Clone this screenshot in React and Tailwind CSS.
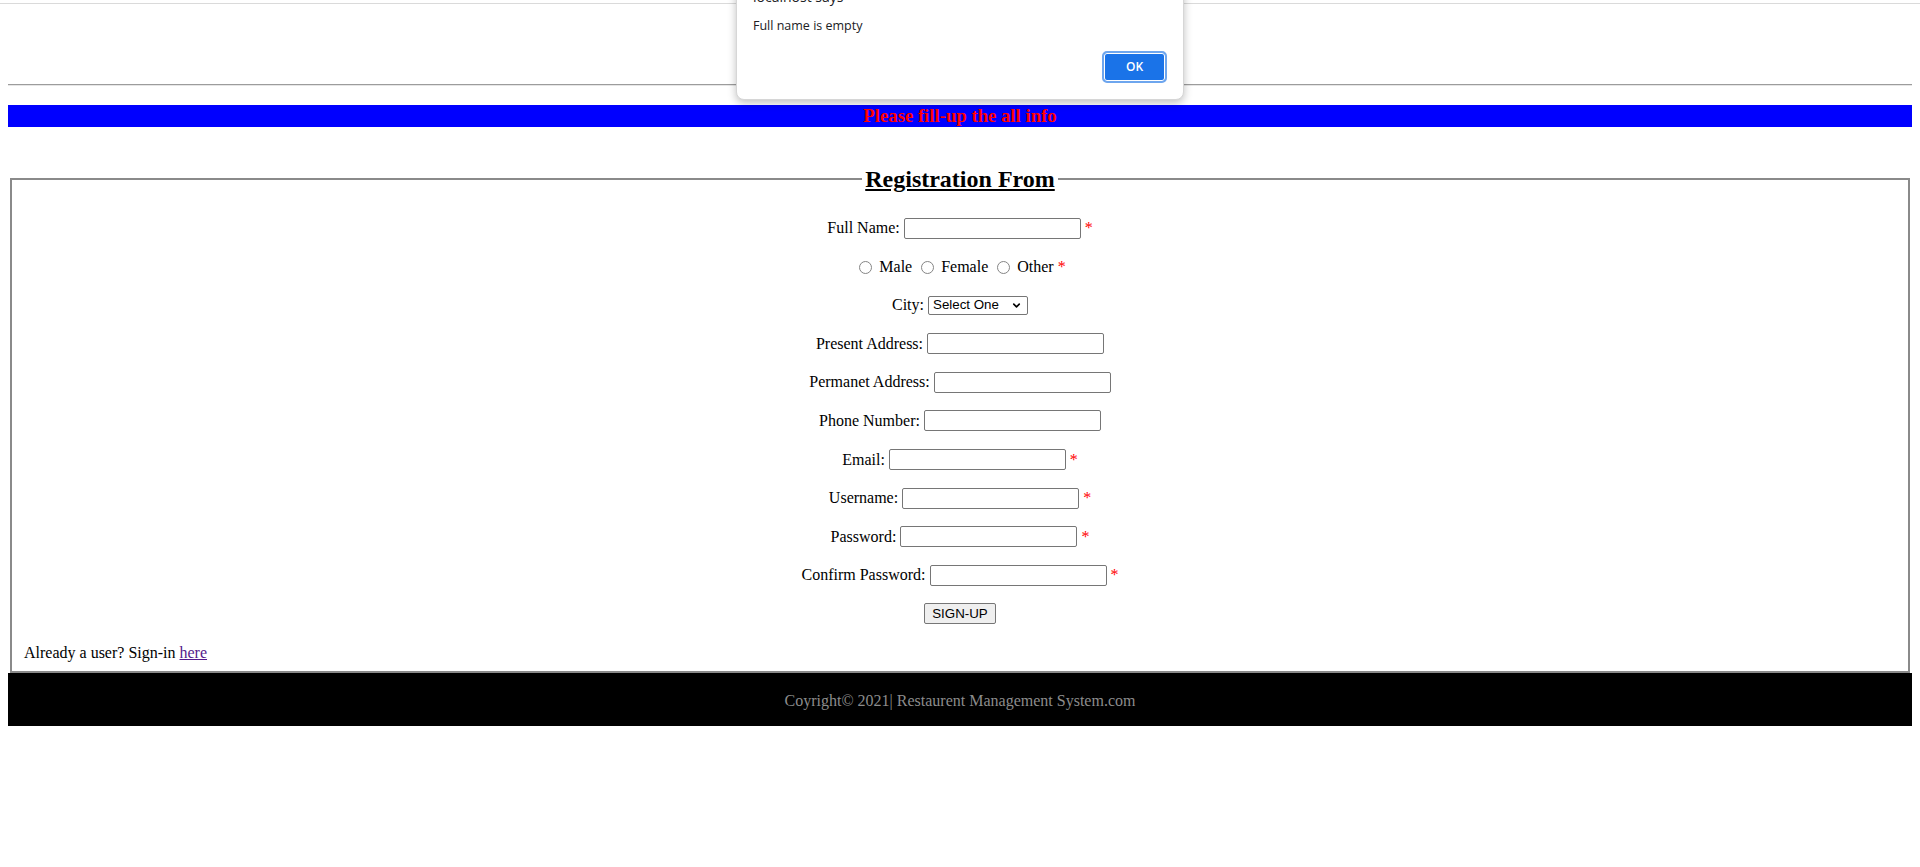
import { ChevronDown } from 'lucide-react';

const rows = [
  { label: 'Full Name:', required: true },
  { type: 'gender' },
  { type: 'city' },
  { label: 'Present Address:' },
  { label: 'Permanet Address:' },
  { label: 'Phone Number:' },
  { label: 'Email:', required: true },
  { label: 'Username:', required: true },
  { label: 'Password:', required: true },
  { label: 'Confirm Password:', required: true },
];

function Star() {
  return <span className="ml-[4px] text-[#ff0000]">*</span>;
}

function TextField({ label, required }) {
  return (
    <div className="flex h-[22px] items-center justify-center">
      <span>{label}</span>
      <input
        type="text"
        className="ml-[4px] h-[21px] w-[177px] rounded-[2px] border border-[#767676] bg-white px-[2px] text-[13px] outline-none"
      />
      {required && <Star />}
    </div>
  );
}

function Radio({ label, first }) {
  return (
    <>
      <span
        className={`${first ? 'ml-[5px]' : 'ml-[9px]'} mr-[7px] inline-block h-[13px] w-[13px] rounded-full border border-[#858585] bg-white`}
      />
      <span>{label}</span>
    </>
  );
}

function GenderRow() {
  return (
    <div className="flex h-[22px] items-center justify-center pt-[1px]">
      <Radio label="Male" first />
      <Radio label="Female" />
      <Radio label="Other" />
      <Star />
    </div>
  );
}

function CityRow() {
  return (
    <div className="flex h-[22px] items-center justify-center">
      <span>City:</span>
      <div className="ml-[4px] flex h-[19px] w-[100px] items-center justify-between rounded-[2px] border border-[#767676] bg-white pl-[4px] pr-[5px] font-['Liberation_Sans',Arial,sans-serif] text-[13.33px] text-black">
        <span>Select One</span>
        <ChevronDown size={11} strokeWidth={3.5} />
      </div>
    </div>
  );
}

function AlertDialog() {
  return (
    <div className="absolute left-1/2 top-[-30px] w-[448px] -translate-x-1/2 rounded-[8px] border border-[#d6d6d6] bg-white px-4 pt-4 pb-4 font-['Open_Sans','Noto_Sans',sans-serif] text-[#202124] shadow-[0_3px_8px_rgba(0,0,0,0.25)]">
      <div className="h-[20px] text-[14px] leading-[20px]">localhost says</div>
      <div className="mt-[9px] h-[20px] text-[12.5px] leading-[20px]">Full name is empty</div>
      <div className="mt-[15px] flex justify-end">
        <button className="flex h-[32px] w-[65px] items-center justify-center rounded-[5px] border-2 border-[#6ea6ee] bg-[#1a73e8] text-[12px] font-semibold text-white shadow-[inset_0_0_0_1px_#ffffff]">
          OK
        </button>
      </div>
    </div>
  );
}

export default function App() {
  return (
    <div className="relative min-h-[867px] bg-white font-['Liberation_Serif','Times_New_Roman',serif] text-[16px] text-black">
      <div className="h-[3px]" />
      <div className="h-px bg-[#dadada]" />

      <div className="px-2">
        {/* header area */}
        <div className="h-[80px]" />
        <div className="h-[2px] border-t border-[#9c9c9c] border-b border-b-[#e6e6e6]" />

        {/* notice bar */}
        <div className="mt-[19px] flex h-[22px] items-center justify-center bg-[#0000ff]">
          <h3 className="text-[18.72px] font-bold leading-[22px] text-[#ff0000]">Please fill-up the all info</h3>
        </div>

        {/* registration form */}
        <fieldset className="mx-[2px] mt-[38px] border-2 border-[#8a8a8a] px-[12px] pb-[7px]">
          <legend align="center" className="px-[3px]">
            <h2 className="text-[24px] font-bold leading-[28px] underline">Registration From</h2>
          </legend>

          <div className="mt-[24px] flex flex-col gap-[16.6px]">
            {rows.map((row, i) => {
              if (row.type === 'gender') return <GenderRow key={i} />;
              if (row.type === 'city') return <CityRow key={i} />;
              return <TextField key={i} label={row.label} required={row.required} />;
            })}

            <div className="flex h-[22px] items-center justify-center">
              <button className="h-[21px] w-[72px] rounded-[2px] border border-[#767676] bg-[#efefef] font-['Liberation_Sans',Arial,sans-serif] text-[13.33px] text-black">
                SIGN-UP
              </button>
            </div>

            <div className="flex h-[22px] items-center">
              <span>
                Already a user? Sign-in{' '}
                <a href="#" className="text-[#551a8b] underline">
                  here
                </a>
              </span>
            </div>
          </div>
        </fieldset>

        {/* footer */}
        <footer className="flex h-[53px] items-center justify-center bg-black pt-[3px] text-[#8c8c8c]">
          <p>Coyright© 2021| Restaurent Management System.com</p>
        </footer>
      </div>

      <AlertDialog />
    </div>
  );
}
